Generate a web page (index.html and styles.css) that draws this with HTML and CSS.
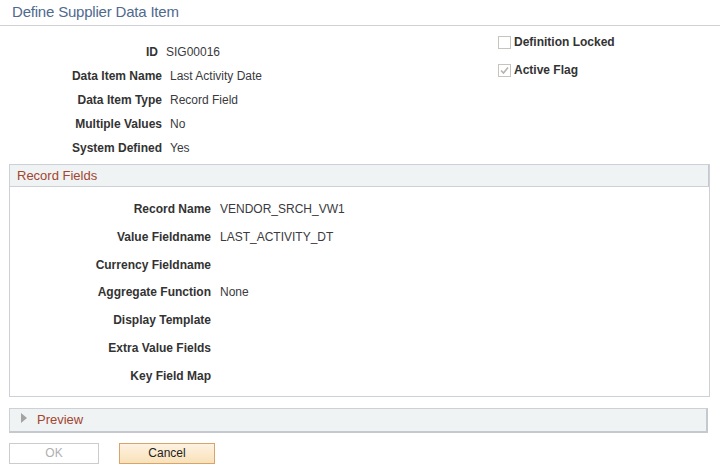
FILE: index.html
```html
<!DOCTYPE html>
<html>
<head>
<meta charset="utf-8">
<link rel="stylesheet" href="styles.css">
</head>
<body>
<div class="page-title">Define Supplier Data Item</div>
<div class="top">
  <div class="fields">
    <div class="label id-label">ID</div><div class="value id-value">SIG00016</div>
    <div class="label">Data Item Name</div><div class="value">Last Activity Date</div>
    <div class="label">Data Item Type</div><div class="value">Record Field</div>
    <div class="label">Multiple Values</div><div class="value">No</div>
    <div class="label">System Defined</div><div class="value">Yes</div>
  </div>
  <div class="checks">
    <div class="check-row"><span class="box"></span><span class="check-label">Definition Locked</span></div>
    <div class="check-row"><span class="box"><svg viewBox="0 0 11 11" width="11" height="11"><path d="M2 5.5 L4.5 8 L9 2.5" fill="none" stroke="#b4b4ac" stroke-width="1.6"/></svg></span><span class="check-label">Active Flag</span></div>
  </div>
</div>
<div class="section">
  <div class="section-head">Record Fields</div>
  <div class="section-body">
    <div class="label">Record Name</div><div class="value">VENDOR_SRCH_VW1</div>
    <div class="label">Value Fieldname</div><div class="value">LAST_ACTIVITY_DT</div>
    <div class="label">Currency Fieldname</div><div class="value"></div>
    <div class="label">Aggregate Function</div><div class="value">None</div>
    <div class="label">Display Template</div><div class="value"></div>
    <div class="label">Extra Value Fields</div><div class="value"></div>
    <div class="label">Key Field Map</div><div class="value"></div>
  </div>
</div>
<div class="preview"><span class="tri"></span><span class="preview-text">Preview</span></div>
<div class="buttons">
  <button class="btn btn-ok">OK</button>
  <button class="btn btn-cancel">Cancel</button>
</div>
</body>
</html>
```
FILE: styles.css
```css
html, body {
  margin: 0;
  padding: 0;
  background: #fff;
  font-family: "Liberation Sans", Arial, sans-serif;
  font-size: 12px;
  color: #333;
}
.page-title {
  height: 25px;
  line-height: 24px;
  padding-left: 12px;
  font-size: 15px;
  letter-spacing: -0.2px;
  color: #4e6a8e;
  border-bottom: 1px solid #cfd1d4;
}
.top {
  display: flex;
  padding-top: 14px;
}
.fields {
  display: grid;
  grid-template-columns: 162px auto;
  grid-auto-rows: 24px;
  column-gap: 8px;
  width: 498px;
  align-content: start;
}
.label {
  font-weight: bold;
  text-align: right;
  line-height: 24px;
  color: #333;
  white-space: nowrap;
}
.value {
  line-height: 24px;
  color: #3a3a40;
  white-space: nowrap;
}
.id-label { padding-right: 4px; }
.id-value { margin-left: -4px; }
.checks {
  display: flex;
  flex-direction: column;
  margin-top: -12px;
}
.check-row {
  display: flex;
  align-items: center;
  height: 28px;
}
.box {
  width: 11px;
  height: 11px;
  border: 1px solid #c6c4bc;
  background: #fff;
  display: flex;
  align-items: center;
  justify-content: center;
  margin-right: 3px;
}
.box svg { display: block; }
.check-label {
  font-weight: bold;
  color: #333;
}
.section {
  margin: 4px 0 0 9px;
  width: 699px;
  border: 1px solid #cdd1d7;
}
.section-head {
  height: 21px;
  line-height: 21px;
  padding-left: 7px;
  font-size: 13px;
  color: #a3452f;
  background: #eff3f4;
  border-bottom: 1px solid #cdd1d7;
  border-right: 1px solid #c5c8ce;
}
.section-body {
  display: grid;
  grid-template-columns: 201px auto;
  grid-auto-rows: 27.8px;
  column-gap: 9px;
  padding: 9px 0 5px;
}
.section-body .label, .section-body .value { line-height: 27.8px; }
.preview {
  margin: 11px 0 0 9px;
  width: 696px;
  height: 22px;
  border: 1px solid #cdd1d7;
  border-right: 2px solid #c5c8ce;
  border-bottom: 2px solid #c5c8ce;
  background: #eff3f4;
  display: flex;
  align-items: center;
}
.tri {
  width: 0;
  height: 0;
  border-top: 5px solid transparent;
  border-bottom: 5px solid transparent;
  border-left: 6px solid #a3a3a3;
  margin-left: 11px;
  margin-right: 10px;
  margin-top: -4px;
}
.preview-text {
  font-size: 13px;
  color: #a3452f;
}
.buttons {
  display: flex;
  gap: 20px;
  margin: 10px 0 0 9px;
}
.btn {
  height: 21px;
  font-family: "Liberation Sans", Arial, sans-serif;
  font-size: 12px;
  padding: 0;
  margin: 0;
}
.btn-ok {
  width: 90px;
  background: #fff;
  border: 1px solid #cccccc;
  color: #b0b0b0;
}
.btn-cancel {
  width: 96px;
  background: linear-gradient(#fdf3e2, #f9e1b8);
  border: 1px solid #d8a46c;
  color: #222;
}
```
